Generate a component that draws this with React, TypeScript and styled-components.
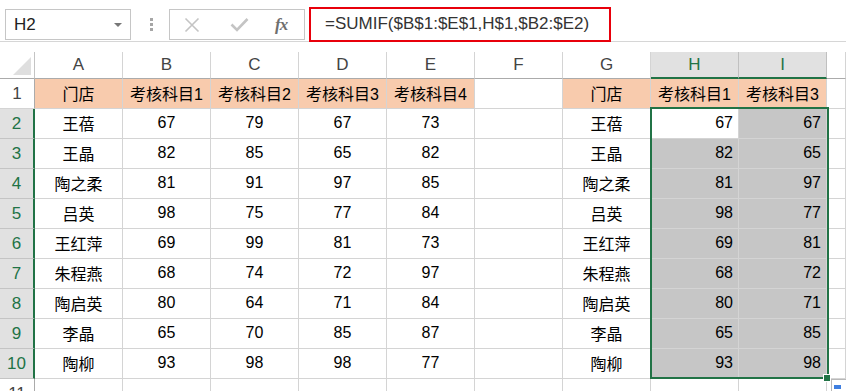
import React from "react"
import styled, { createGlobalStyle, css } from "styled-components"

const GlobalStyle = createGlobalStyle`
  html, body {
    margin: 0;
    padding: 0;
    background: #ffffff;
  }
  body {
    font-family: "Liberation Sans", "Noto Sans CJK SC", sans-serif;
  }
`

const GREEN = "#217346"
const GRID = "#d4d4d4"

const Page = styled.div`
  width: 846px;
  height: 391px;
  overflow: hidden;
  position: relative;
  background: #fff;
`

// ---------- formula bar ----------

const TopBar = styled.div`
  display: flex;
  align-items: flex-start;
  height: 41px;
  border-bottom: 1px solid #d6d6d6;
`

const NameBox = styled.div`
  box-sizing: border-box;
  margin: 9px 0 0 5px;
  width: 126px;
  height: 31px;
  border: 1px solid #c6c6c6;
  display: flex;
  align-items: center;
  justify-content: space-between;
  padding: 0 8px 0 8px;
  font-size: 17px;
  color: #222;
`

const Caret = styled.span`
  width: 0;
  height: 0;
  border-left: 4px solid transparent;
  border-right: 4px solid transparent;
  border-top: 4px solid #777;
  margin-top: 1px;
`

const Dots = styled.div`
  margin: 18px 0 0 19px;
  display: flex;
  flex-direction: column;
  gap: 2px;

  & span {
    width: 3px;
    height: 3px;
    background: #a6a6a6;
  }
`

const FxButtons = styled.div`
  box-sizing: border-box;
  margin: 9px 0 0 16px;
  width: 136px;
  height: 31px;
  border: 1px solid #c6c6c6;
  display: flex;
  align-items: center;
  padding: 0 0 0 14px;
`

const FxLabel = styled.span`
  font-family: "Liberation Serif", serif;
  font-style: italic;
  font-weight: bold;
  font-size: 17px;
  color: #6f6f6f;
  margin-left: 26px;
  letter-spacing: -1px;
`

const FormulaInput = styled.div`
  box-sizing: border-box;
  margin: 7px 0 0 4px;
  width: 302px;
  height: 35px;
  border: 2px solid #e8000b;
  display: flex;
  align-items: center;
  padding: 0 0 1px 14px;
  font-size: 17px;
  color: #333;
  white-space: nowrap;
`

// ---------- sheet ----------

const Sheet = styled.div`
  position: relative;
  margin-top: 10px;
  display: grid;
  grid-template-columns: 35px repeat(9, 88px) 1fr;
  grid-template-rows: 27px repeat(11, 30px);
  font-size: 16px;
`

const Corner = styled.div`
  position: relative;
  box-sizing: border-box;
  border-right: 1px solid #c4c4c4;
  border-bottom: 1px solid #ababab;

  &::after {
    content: "";
    position: absolute;
    right: 3px;
    bottom: 3px;
    width: 0;
    height: 0;
    border-left: 18px solid transparent;
    border-bottom: 18px solid #dfdfdf;
  }
`

const ColHeader = styled.div<{ $active?: boolean }>`
  box-sizing: border-box;
  display: flex;
  align-items: center;
  justify-content: center;
  border-right: 1px solid ${GRID};
  border-bottom: 1px solid #ababab;
  color: #444;
  font-size: 17px;
  padding-bottom: 1px;
  ${(p) =>
    p.$active &&
    css`
      background: #e1e1e1;
      color: ${GREEN};
      border-right-color: #c0c0c0;
      border-bottom: 2px solid ${GREEN};
      padding-bottom: 0;
    `}
`

const RowHeader = styled.div<{ $active?: boolean }>`
  box-sizing: border-box;
  display: flex;
  align-items: center;
  justify-content: center;
  border-right: 1px solid #ababab;
  border-bottom: 1px solid ${GRID};
  color: #444;
  font-size: 17px;
  ${(p) =>
    p.$active &&
    css`
      background: #e1e1e1;
      color: ${GREEN};
      border-right: 2px solid ${GREEN};
      border-bottom-color: #c4c4c4;
    `}
`

const Cell = styled.div<{ $fill?: string; $right?: boolean }>`
  box-sizing: border-box;
  display: flex;
  align-items: center;
  justify-content: ${(p) => (p.$right ? "flex-end" : "center")};
  padding: ${(p) => (p.$right ? "0 5px 1px 0" : "0 0 1px 0")};
  border-right: 1px solid ${GRID};
  border-bottom: 1px solid ${GRID};
  background: ${(p) => p.$fill || "#fff"};
  color: #000;
  white-space: nowrap;
`

const Selection = styled.div`
  position: absolute;
  box-sizing: border-box;
  left: 650px;
  top: 55px;
  width: 179px;
  height: 272px;
  border: 2px solid ${GREEN};
  pointer-events: none;
`

const FillHandle = styled.div`
  position: absolute;
  left: 823px;
  top: 322px;
  width: 6px;
  height: 6px;
  background: ${GREEN};
  border: 1px solid #fff;
`

const PasteOptions = styled.div`
  position: absolute;
  left: 831px;
  top: 327px;
  width: 20px;
  height: 16px;
  box-sizing: border-box;
  border: 1px solid #b8b8b8;
  background: #fff;
  padding: 5px 0 0 2px;

  & span {
    display: block;
    width: 7px;
    height: 4px;
    background: #3f7fe0;
  }
`

const HEADER_FILL = "#f8cbad"
const SEL_FILL = "#c6c6c6"

const cols = ["A", "B", "C", "D", "E", "F", "G", "H", "I", ""]

const data: [string, number, number, number, number][] = [
  ["王蓓", 67, 79, 67, 73],
  ["王晶", 82, 85, 65, 82],
  ["陶之柔", 81, 91, 97, 85],
  ["吕英", 98, 75, 77, 84],
  ["王红萍", 69, 99, 81, 73],
  ["朱程燕", 68, 74, 72, 97],
  ["陶启英", 80, 64, 71, 84],
  ["李晶", 65, 70, 85, 87],
  ["陶柳", 93, 98, 98, 77],
]

const CrossIcon = () => (
  <svg width="16" height="16" viewBox="0 0 16 16">
    <path d="M1.5 1.5 L14.5 14.5 M14.5 1.5 L1.5 14.5" stroke="#c4c4c4" strokeWidth="1.6" fill="none" />
  </svg>
)

const CheckIcon = () => (
  <svg width="19" height="15" viewBox="0 0 19 15" style={{ marginLeft: 30 }}>
    <path d="M1.5 7.5 L7 13 L17.5 2" stroke="#c4c4c4" strokeWidth="2.6" fill="none" />
  </svg>
)

const App = () => {
  return (
    <Page>
      <GlobalStyle />
      <TopBar>
        <NameBox>
          H2
          <Caret />
        </NameBox>
        <Dots>
          <span />
          <span />
          <span />
        </Dots>
        <FxButtons>
          <CrossIcon />
          <CheckIcon />
          <FxLabel>fx</FxLabel>
        </FxButtons>
        <FormulaInput>=SUMIF($B$1:$E$1,H$1,$B2:$E2)</FormulaInput>
      </TopBar>

      <Sheet>
        <Corner />
        {cols.map((c, i) => (
          <ColHeader key={"h" + i} $active={c === "H" || c === "I"}>
            {c}
          </ColHeader>
        ))}

        {/* row 1: titles */}
        <RowHeader>1</RowHeader>
        <Cell $fill={HEADER_FILL}>门店</Cell>
        <Cell $fill={HEADER_FILL}>考核科目1</Cell>
        <Cell $fill={HEADER_FILL}>考核科目2</Cell>
        <Cell $fill={HEADER_FILL}>考核科目3</Cell>
        <Cell $fill={HEADER_FILL}>考核科目4</Cell>
        <Cell />
        <Cell $fill={HEADER_FILL}>门店</Cell>
        <Cell $fill={HEADER_FILL}>考核科目1</Cell>
        <Cell $fill={HEADER_FILL}>考核科目3</Cell>
        <Cell />

        {data.map((row, r) => (
          <React.Fragment key={r}>
            <RowHeader $active>{r + 2}</RowHeader>
            <Cell>{row[0]}</Cell>
            <Cell>{row[1]}</Cell>
            <Cell>{row[2]}</Cell>
            <Cell>{row[3]}</Cell>
            <Cell>{row[4]}</Cell>
            <Cell />
            <Cell>{row[0]}</Cell>
            <Cell $right $fill={r === 0 ? "#fff" : SEL_FILL}>
              {row[1]}
            </Cell>
            <Cell $right $fill={SEL_FILL}>
              {row[3]}
            </Cell>
            <Cell />
          </React.Fragment>
        ))}

        <RowHeader>11</RowHeader>
        {cols.map((_, i) => (
          <Cell key={"r11" + i} />
        ))}

        <Selection />
        <FillHandle />
        <PasteOptions>
          <span />
        </PasteOptions>
      </Sheet>
    </Page>
  )
}

export default App
